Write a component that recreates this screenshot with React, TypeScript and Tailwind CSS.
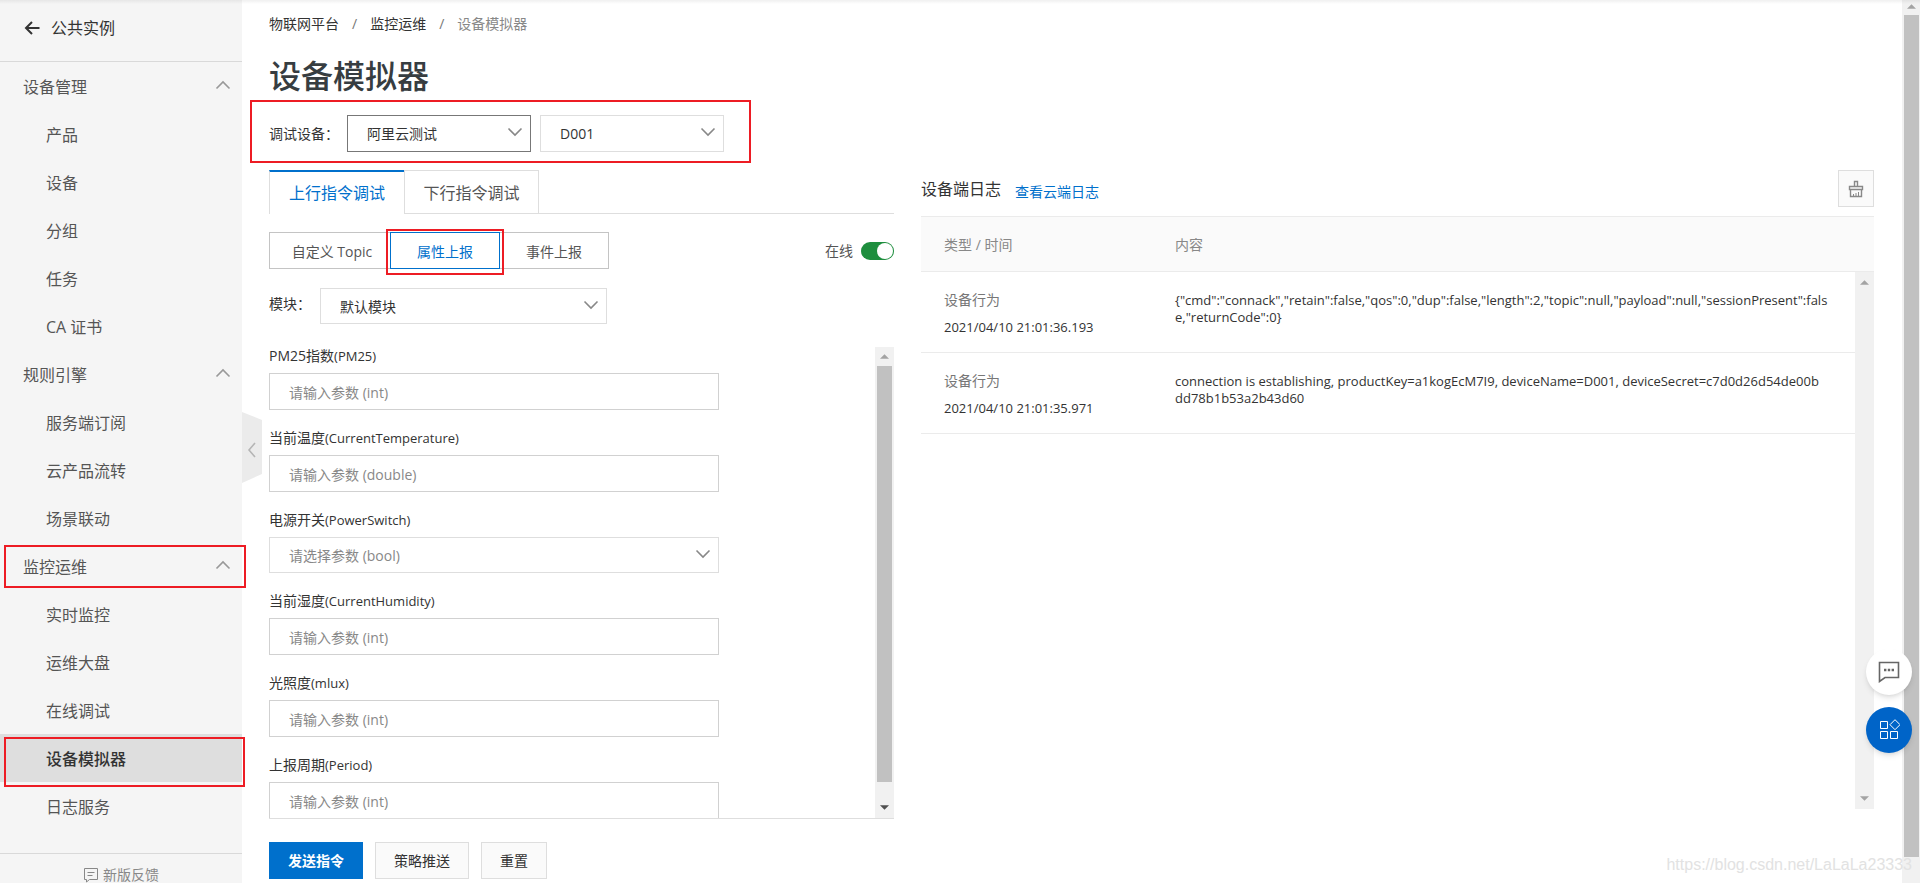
import { useState } from "react";
import type { ReactNode } from "react";

type Group = { title: string; items: string[]; marked?: boolean };
type Field = { label: string; code: string; type: string; select?: boolean };
type Log = { kind: string; time: string; body: string };

const groups: Group[] = [
  { title: "设备管理", items: ["产品", "设备", "分组", "任务", "CA 证书"] },
  { title: "规则引擎", items: ["服务端订阅", "云产品流转", "场景联动"] },
  {
    title: "监控运维",
    items: ["实时监控", "运维大盘", "在线调试", "设备模拟器", "日志服务"],
    marked: true,
  },
];

const fields: Field[] = [
  { label: "PM25指数", code: "PM25", type: "int" },
  { label: "当前温度", code: "CurrentTemperature", type: "double" },
  { label: "电源开关", code: "PowerSwitch", type: "bool", select: true },
  { label: "当前湿度", code: "CurrentHumidity", type: "int" },
  { label: "光照度", code: "mlux", type: "int" },
  { label: "上报周期", code: "Period", type: "int" },
];

const logs: Log[] = [
  {
    kind: "设备行为",
    time: "2021/04/10 21:01:36.193",
    body: '{"cmd":"connack","retain":false,"qos":0,"dup":false,"length":2,"topic":null,"payload":null,"sessionPresent":fals\ne,"returnCode":0}',
  },
  {
    kind: "设备行为",
    time: "2021/04/10 21:01:35.971",
    body: "connection is establishing, productKey=a1kogEcM7I9, deviceName=D001, deviceSecret=c7d0d26d54de00b\ndd78b1b53a2b43d60",
  },
];

/* Red frame drawn over the part that it wraps */
function Mark({ className }: { className: string }) {
  return (
    <span
      className={`pointer-events-none absolute z-10 border-2 border-[#ed1c24] ${className}`}
    />
  );
}

function Chevron({ className }: { className: string }) {
  return (
    <svg
      viewBox="0 0 16 10"
      className={`h-[10px] w-4 fill-none stroke-current ${className}`}
      strokeWidth="1.6"
    >
      <path d="M1.5 1.5 8 8l6.5-6.5" />
    </svg>
  );
}

function Arrow({ down, className }: { down?: boolean; className: string }) {
  return (
    <svg viewBox="0 0 10 5" className={`h-[5px] w-[9px] fill-current ${className}`}>
      <path d={down ? "M0 0h10L5 5z" : "M0 5h10L5 0z"} />
    </svg>
  );
}

function Select({
  id,
  label,
  className,
  children,
}: {
  id?: string;
  label: string;
  className: string;
  children: ReactNode;
}) {
  return (
    <div className={`relative ${className}`}>
      <select
        id={id}
        aria-label={label}
        className="h-full w-full appearance-none border border-inherit bg-white pl-[19px] pr-10 pt-px text-sm text-inherit outline-none"
      >
        {children}
      </select>
      <Chevron className="pointer-events-none absolute right-2 top-3 text-[#888]" />
    </div>
  );
}

function Sidebar() {
  return (
    <aside className="flex w-[242px] shrink-0 flex-col bg-[#f5f5f5] text-base text-[#555]">
      <a
        href="#instance"
        className="flex h-[62px] shrink-0 items-center gap-[11px] border-b border-[#d9d9d9] pb-1.5 pl-6 text-[#333]"
      >
        <svg
          viewBox="0 0 16 14"
          className="h-[14px] w-4 fill-none stroke-[#333]"
          strokeWidth="2"
        >
          <path d="M15.5 7H2M8 1 2 7l6 6" />
        </svg>
        公共实例
      </a>
      <nav className="shrink-0">
        {groups.map((g) => (
          <div key={g.title}>
            <button className="relative flex h-12 w-full items-center justify-between pl-[23px] pr-[11px] pt-0.5">
              {g.title}
              <Chevron className="mb-1 rotate-180 text-[#999]" />
              {g.marked && <Mark className="-right-1 left-1 top-[3px] h-[43px]" />}
            </button>
            {g.items.map((item) => {
              const active = item === "设备模拟器";
              return (
                <a
                  key={item}
                  href={`#${item}`}
                  className={`relative flex h-12 items-center pl-[46px] pt-0.5 ${
                    active ? "bg-[#dedede] font-medium text-[#333]" : ""
                  }`}
                >
                  {item}
                  {active && <Mark className="-right-[3px] left-1 top-[3px] h-[50px]" />}
                </a>
              );
            })}
          </div>
        ))}
      </nav>
      <a
        href="#feedback"
        className="mt-[23px] flex h-[30px] shrink-0 items-end justify-center gap-1 border-t border-[#d9d9d9] text-sm leading-4 text-[#888]"
      >
        <svg viewBox="0 0 16 16" className="size-4 fill-none stroke-[#888]">
          <path d="M1.5 1.5h13v11h-8l-3 2.5v-2.5h-2zM4.5 5.5h7M4.5 8.5h5" />
        </svg>
        新版反馈
      </a>
    </aside>
  );
}

function CommandPanel() {
  const [online, setOnline] = useState(true);

  return (
    <section className="w-[625px] shrink-0">
      {/* Tabs */}
      <div className="flex h-11 border-b border-[#dedede] text-base">
        <button className="-mb-px w-[135px] border-l border-t-2 border-l-[#dedede] border-t-[#0070cc] bg-white text-[#0070cc]">
          上行指令调试
        </button>
        <button className="w-[135px] border-x border-t border-[#dedede] pt-0.5 text-[#555]">
          下行指令调试
        </button>
      </div>

      <div className="mt-[18px] flex items-center justify-between">
        <div className="flex h-[37px] text-sm text-[#555]">
          <button className="w-[121px] border border-r-0 border-[#c4c4c4] pl-1 pt-0.5">
            自定义 Topic
          </button>
          <button className="relative w-[110px] border border-[#0070cc] pt-0.5 text-[#0070cc]">
            属性上报
            <Mark className="-inset-x-[5px] -bottom-[7px] -top-1" />
          </button>
          <button className="w-[109px] border border-l-0 border-[#c4c4c4] pt-0.5">
            事件上报
          </button>
        </div>
        <label className="flex items-center gap-2 text-sm text-[#555]">
          在线
          <input
            type="checkbox"
            checked={online}
            onChange={(e) => setOnline(e.target.checked)}
            className="peer sr-only"
          />
          <span className="flex h-[18px] w-[33px] justify-start rounded-full bg-[#c4c4c4] p-px peer-checked:justify-end peer-checked:bg-[#1e8e3e]">
            <span className="size-4 rounded-full bg-white" />
          </span>
        </label>
      </div>

      <div className="mt-[19px] flex text-sm text-[#333]">
        <label htmlFor="module" className="w-[51px] shrink-0 pt-1.5">
          模块：
        </label>
        <Select id="module" label="模块" className="h-9 w-[287px] border-[#dedede]">
          <option>默认模块</option>
        </Select>
      </div>

      {/* Property form */}
      <div className="mt-[23px] flex h-[472px] border-b border-[#dedede]">
        <form className="flex flex-1 flex-col gap-[19px] overflow-hidden">
          {fields.map((f) => (
            <div key={f.code} className="flex w-[450px] shrink-0 flex-col gap-2">
              <label htmlFor={f.code} className="h-[18px] text-sm leading-[18px] text-[#333]">
                {f.label}
                <span className="text-[13px]">({f.code})</span>
              </label>
              {f.select ? (
                <Select
                  id={f.code}
                  label={f.label}
                  className="h-9 w-full border-[#dedede] text-[#888]"
                >
                  <option>请选择参数 ({f.type})</option>
                </Select>
              ) : (
                <input
                  id={f.code}
                  placeholder={`请输入参数 (${f.type})`}
                  className="h-[37px] border border-[#d1d1d1] px-[19px] pt-px text-sm outline-none placeholder:text-[#888]"
                />
              )}
            </div>
          ))}
        </form>
        <div className="flex w-[19px] flex-col items-center bg-[#f1f1f1]">
          <Arrow className="my-[7px] text-[#a3a3a3]" />
          <div className="w-[15px] flex-1 bg-[#c1c1c1]" />
          <Arrow down className="mb-2 mt-[23px] text-[#505050]" />
        </div>
      </div>

      <div className="mt-[23px] flex h-[37px] gap-3 text-sm text-[#333]">
        <button className="w-[94px] bg-[#0070cc] font-bold text-white">发送指令</button>
        <button className="w-[94px] border border-[#dedede] bg-[#fafafa]">
          策略推送
        </button>
        <button className="w-[66px] border border-[#dedede] bg-[#fafafa]">重置</button>
      </div>
    </section>
  );
}

function LogPanel() {
  return (
    <section className="min-w-0 flex-1">
      <div className="flex h-[37px] items-center">
        <h2 className="text-base text-[#333]">设备端日志</h2>
        <a href="#cloud-log" className="ml-3.5 mt-1.5 text-sm text-[#0070cc]">
          查看云端日志
        </a>
        <button
          aria-label="清空日志"
          className="ml-auto flex h-[37px] w-9 items-center justify-center border border-[#dedede] bg-[#fafafa]"
        >
          <svg viewBox="0 0 16 18" className="h-[18px] w-4 fill-none stroke-[#888]">
            <path
              d="M6.5 6V1.5h3V6M1.5 6.5h13v3h-13zM2.5 9.5v7h11v-7"
              strokeWidth="1.4"
            />
            <path d="M5.5 16v-2M8 16v-3M10.5 16v-4" />
          </svg>
        </button>
      </div>

      <table className="mt-[9px] w-full table-fixed border-separate border-spacing-0 text-left">
        <thead>
          <tr className="h-14 bg-[#fafafa] text-sm text-[#888]">
            <th className="w-[231px] border-y border-[#ebebeb] pl-[23px] pt-0.5 font-normal">
              类型 / 时间
            </th>
            <th className="border-y border-[#ebebeb] pl-[23px] pt-0.5 font-normal">
              内容
            </th>
            <th className="w-[19px] border-y border-[#ebebeb]" />
          </tr>
        </thead>
        <tbody>
          {logs.map((log, i) => (
            <tr key={log.time} className="h-[81px] align-top">
              <td className="border-b border-[#ebebeb] pl-[23px] pt-[18px] text-sm text-[#777]">
                {log.kind}
                <div className="mt-[7px] text-[13px] leading-5 text-[#333]">
                  {log.time}
                </div>
              </td>
              <td className="whitespace-pre-line break-all border-b border-[#ebebeb] pl-[23px] pr-5 pt-5 text-[13px] leading-[17px] text-[#333]">
                {log.body}
              </td>
              {i === 0 && (
                <td rowSpan={logs.length + 1} className="bg-[#f1f1f1] p-0">
                  <div className="flex h-[537px] flex-col items-center justify-between py-2">
                    <Arrow className="text-[#a3a3a3]" />
                    <Arrow down className="text-[#a3a3a3]" />
                  </div>
                </td>
              )}
            </tr>
          ))}
          <tr>
            <td colSpan={2} className="h-[375px] p-0" />
          </tr>
        </tbody>
      </table>
    </section>
  );
}

export default function App() {
  return (
    <div className="relative flex h-screen overflow-hidden bg-white font-['Open_Sans','Noto_Sans_CJK_SC',sans-serif]">
      <div className="absolute inset-x-0 top-0 h-1 bg-linear-to-b from-black/6 to-transparent" />
      <Sidebar />

      {/* Sidebar handle */}
      <button aria-label="收起" className="absolute left-[242px] top-[412px]">
        <svg viewBox="0 0 20 71" className="h-[71px] w-5">
          <path d="M0 0 20 8v54L0 71z" fill="#ebebeb" />
          <path d="m13 31-6 7 6 7" fill="none" stroke="#b5b5b5" strokeWidth="1.6" />
        </svg>
      </button>

      <main className="min-w-0 flex-1 pl-[27px] pr-7">
        <nav className="flex gap-[13px] pt-3.5 text-sm text-[#333]">
          <a href="#iot">物联网平台</a>
          <span className="text-[#777]">/</span>
          <a href="#ops">监控运维</a>
          <span className="text-[#777]">/</span>
          <span className="text-[#888]">设备模拟器</span>
        </nav>
        <h1 className="mt-[22px] text-[32px] font-medium leading-10 text-[#373d41]">
          设备模拟器
        </h1>

        <div className="relative mt-[19px] flex h-[37px] w-[455px] items-center text-sm text-[#333]">
          <label htmlFor="product" className="w-[78px] shrink-0">
            调试设备：
          </label>
          <Select id="product" label="产品" className="h-full w-[184px] border-[#777]">
            <option>阿里云测试</option>
          </Select>
          <Select label="设备" className="ml-[9px] h-full w-[184px] border-[#dedede]">
            <option>D001</option>
          </Select>
          <Mark className="-bottom-[11px] -left-[19px] -right-[27px] -top-[15px]" />
        </div>

        <div className="mt-[18px] flex gap-[27px]">
          <CommandPanel />
          <LogPanel />
        </div>
      </main>

      {/* Page scrollbar */}
      <div className="flex w-[18px] shrink-0 flex-col items-center bg-[#f1f1f1]">
        <Arrow className="mb-1.5 mt-1 text-[#a3a3a3]" />
        <div className="mb-[26px] w-[15px] flex-1 bg-[#c1c1c1]" />
      </div>

      {/* Floating tools */}
      <div className="absolute bottom-[130px] right-2 flex flex-col gap-3">
        <button
          aria-label="咨询"
          className="flex size-[46px] items-center justify-center rounded-full bg-white shadow-md"
        >
          <svg
            viewBox="0 0 22 22"
            className="size-[22px] fill-none stroke-[#666]"
            strokeWidth="1.6"
          >
            <path d="M1.5 1.5h19v15H7l-5.5 4z" />
            <path d="M6 9h2.4M9.8 9h2.4M13.6 9H16" strokeWidth="2.4" />
          </svg>
        </button>
        <button
          aria-label="工具"
          className="flex size-[46px] items-center justify-center rounded-full bg-[#0064c8] shadow-md"
        >
          <svg viewBox="0 0 22 22" className="size-[22px] fill-none stroke-white">
            <path d="M2.5 2.5h7v7h-7zM2.5 12.5h7v7h-7zM12.5 12.5h7v7h-7zM17 .7l5 5-5 5-5-5z" />
          </svg>
        </button>
      </div>

      <span className="absolute bottom-1.5 right-2 font-['Liberation_Sans',sans-serif] text-base text-[#e2e2e2]">
        https://blog.csdn.net/LaLaLa23333
      </span>
    </div>
  );
}
